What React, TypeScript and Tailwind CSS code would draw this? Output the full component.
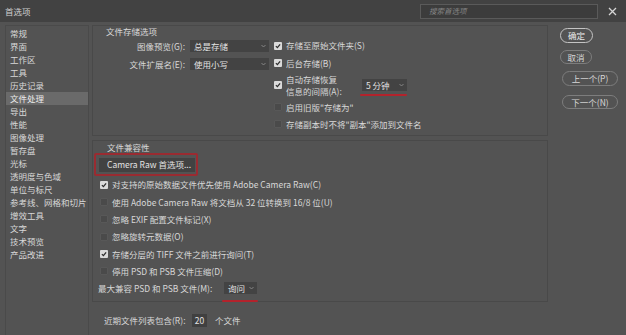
import React from "react";

function Check({ checked }: { checked?: boolean }) {
  return checked ? (
    <span className="w-[8px] h-[8px] bg-[#dadada] rounded-[1px] flex items-center justify-center shrink-0">
      <svg width="6" height="6" viewBox="0 0 6 6">
        <path d="M0.9 3.1 L2.4 4.6 L5.1 1.4" stroke="#2e2e2e" strokeWidth="1.3" fill="none" />
      </svg>
    </span>
  ) : (
    <span className="w-[8px] h-[8px] bg-[#4a4a4a] border border-[#585858] rounded-[1px] shrink-0" />
  );
}

function Chevron() {
  return (
    <svg width="5" height="4" viewBox="0 0 5 4" className="shrink-0">
      <path d="M0.5 1 L2.5 3 L4.5 1" stroke="#8c8c8c" strokeWidth="0.9" fill="none" />
    </svg>
  );
}

function Sel({ label, className }: { label: string; className: string }) {
  return (
    <div className={"h-[12px] bg-[#434343] flex items-center justify-between pl-[4px] pr-[3px] shrink-0 " + className}>
      <span className="text-[#e2e2e2] leading-none">{label}</span>
      <Chevron />
    </div>
  );
}

const sidebar = [
  "常规",
  "界面",
  "工作区",
  "工具",
  "历史记录",
  "文件处理",
  "导出",
  "性能",
  "图像处理",
  "暂存盘",
  "光标",
  "透明度与色域",
  "单位与标尺",
  "参考线、网格和切片",
  "增效工具",
  "文字",
  "技术预览",
  "产品改进",
];

function Row({ checked, text }: { checked?: boolean; text: string }) {
  return (
    <div className="h-[17.3px] flex items-center gap-[4px] pl-[7px]">
      <Check checked={checked} />
      <span className="whitespace-nowrap leading-none">{text}</span>
    </div>
  );
}

export default function App() {
  return (
    <div className="w-[626px] h-[335px] overflow-hidden bg-[#535353] text-[#d8d8d8] text-[8.5px] font-['Noto_Sans_CJK_SC','Noto_Sans',sans-serif]">
      {/* title bar */}
      <div className="h-[22px] bg-[#424242] flex items-center pl-[5px] pr-[9px]">
        <span className="text-[#d0d0d0] text-[8.5px]">首选项</span>
        <div className="ml-auto w-[178px] h-[15px] border border-[#5a5a5a] bg-[#3c3c3c] flex items-center pl-[8px]">
          <span className="italic text-[#858585] text-[7.5px] leading-none">搜索首选项</span>
        </div>
        <svg width="9" height="9" viewBox="0 0 9 9" className="ml-[10px]">
          <path d="M1 1 L8 8 M8 1 L1 8" stroke="#d6d6d6" strokeWidth="1.3" />
        </svg>
      </div>

      {/* body */}
      <div className="flex pl-[5px] pt-[3px]">
        {/* sidebar */}
        <div className="w-[84px] h-[320px] border border-[#4a4a4a] pt-[0.5px] shrink-0">
          {sidebar.map((s) => (
            <div
              key={s}
              className={
                "h-[13px] flex items-center pl-[4px] whitespace-nowrap leading-none " +
                (s === "文件处理" ? "bg-[#6a6a6a] text-[#ececec]" : "")
              }
            >
              {s}
            </div>
          ))}
        </div>

        {/* main */}
        <div className="w-[456px] ml-[3px] shrink-0 flex flex-col">
          {/* box 1 */}
          <div className="h-[111px] border border-[#494949] flex flex-col">
            <div className="h-[11px] flex items-center pl-[13px] leading-none">文件存储选项</div>
            <div className="flex">
              <div className="w-[181px] shrink-0 flex flex-col">
                <div className="h-[18px] flex items-center">
                  <span className="w-[92px] text-right whitespace-nowrap leading-none">图像预览(G):</span>
                  <Sel label="总是存储" className="w-[79px] ml-[5px]" />
                </div>
                <div className="h-[18px] flex items-center">
                  <span className="w-[92px] text-right whitespace-nowrap leading-none">文件扩展名(E):</span>
                  <Sel label="使用小写" className="w-[79px] ml-[5px]" />
                </div>
              </div>
              <div className="flex flex-col">
                <div className="h-[17px] flex items-center gap-[4px]">
                  <Check checked />
                  <span className="leading-none">存储至原始文件夹(S)</span>
                </div>
                <div className="h-[18px] flex items-center gap-[4px]">
                  <Check checked />
                  <span className="leading-none">后台存储(B)</span>
                </div>
                <div className="h-[26px] flex items-center">
                  <Check checked />
                  <div className="ml-[4px] w-[76px] flex flex-col gap-[3.5px]">
                    <span className="leading-none whitespace-nowrap">自动存储恢复</span>
                    <span className="leading-none whitespace-nowrap">信息的间隔(A):</span>
                  </div>
                  <div className="relative">
                    <Sel label="5 分钟" className="w-[45px]" />
                    <div className="absolute left-[-2px] top-[15px] w-[47px] h-[2px] rounded-full bg-[#b3232c]" />
                  </div>
                </div>
                <div className="h-[18px] flex items-center gap-[4px]">
                  <Check />
                  <span className="leading-none">启用旧版"存储为"</span>
                </div>
                <div className="h-[16px] flex items-center gap-[4px]">
                  <Check />
                  <span className="leading-none">存储副本时不将"副本"添加到文件名</span>
                </div>
              </div>
            </div>
          </div>

          {/* box 2 */}
          <div className="h-[162px] mt-[4px] border border-[#494949] flex flex-col">
            <div className="h-[11px] mt-[1px] flex items-center pl-[14px] leading-none">文件兼容性</div>
            <div className="mt-[0px] ml-[1px] w-[104px] h-[23px] border-[2px] border-[#9a2b31] rounded-[2px] flex items-center pl-[3px]">
              <div className="w-[96px] h-[14px] bg-[#424242] flex items-center pl-[8px] whitespace-nowrap leading-none text-[#e2e2e2]">
                Camera Raw 首选项...
              </div>
            </div>
            <div className="flex flex-col">
              <Row checked text="对支持的原始数据文件优先使用 Adobe Camera Raw(C)" />
              <Row text="使用 Adobe Camera Raw 将文档从 32 位转换到 16/8 位(U)" />
              <Row text="忽略 EXIF 配置文件标记(X)" />
              <Row text="忽略旋转元数据(O)" />
              <Row checked text="存储分层的 TIFF 文件之前进行询问(T)" />
              <Row text="停用 PSD 和 PSB 文件压缩(D)" />
              <div className="h-[17.3px] flex items-center pl-[5px]">
                <span className="w-[126px] whitespace-nowrap leading-none">最大兼容 PSD 和 PSB 文件(M):</span>
                <div className="relative">
                  <Sel label="询问" className="w-[33px]" />
                  <div className="absolute left-[-2px] top-[18px] w-[36px] h-[2px] rounded-full bg-[#b3232c]" />
                </div>
              </div>
            </div>
          </div>

          {/* bottom */}
          <div className="h-[13px] mt-[12px] flex items-center pl-[12px]">
            <span className="w-[88px] whitespace-nowrap leading-none">近期文件列表包含(R):</span>
            <div className="w-[15px] h-[13px] bg-[#404040] flex items-center justify-center leading-none text-[#e2e2e2]">20</div>
            <span className="ml-[8px] leading-none">个文件</span>
          </div>
        </div>

        {/* buttons */}
        <div className="ml-[12px] flex flex-col items-start">
          <div className="mt-[3px] w-[33px] h-[15px] rounded-full border-[1.5px] border-[#c4c4c4] flex items-center justify-center leading-none text-[#ececec]">确定</div>
          <div className="mt-[7px] w-[32px] h-[14px] rounded-full border border-[#7d7d7d] flex items-center justify-center leading-none">取消</div>
          <div className="mt-[7px] ml-[2px] w-[56px] h-[15px] rounded-full border border-[#7d7d7d] flex items-center justify-center leading-none">上一个(P)</div>
          <div className="mt-[9px] ml-[2px] w-[56px] h-[14px] rounded-full border border-[#7d7d7d] flex items-center justify-center leading-none">下一个(N)</div>
        </div>
      </div>
    </div>
  );
}
